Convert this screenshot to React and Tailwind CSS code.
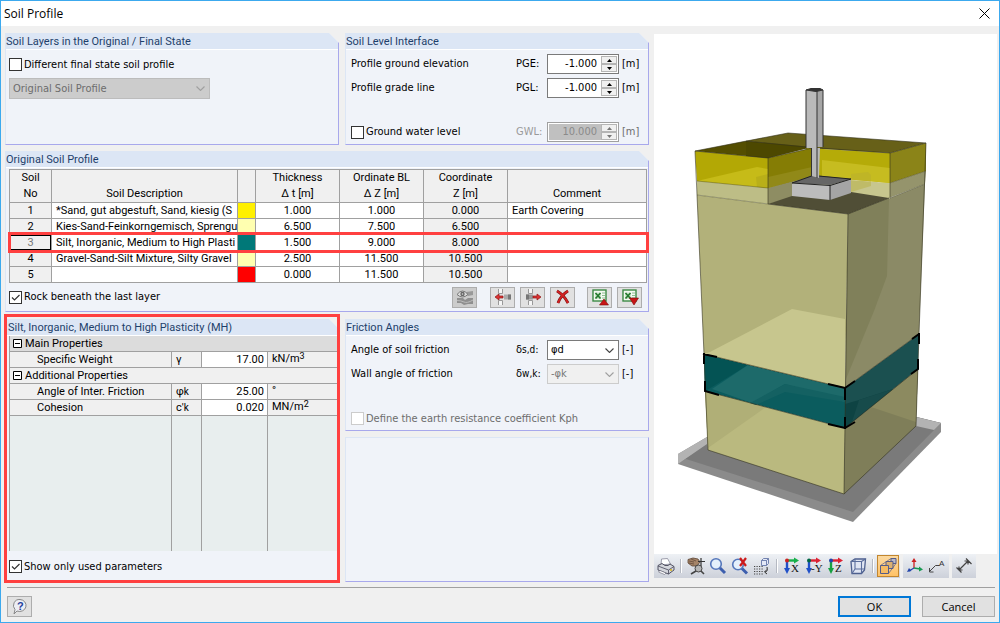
import React, { useState } from "react";

const LAYERS = [
    { no: 1, name: "*Sand, gut abgestuft, Sand, kiesig (S", swatch: "bg-[#fff000]", t: "1.000", dz: "1.000", z: "0.000", comment: "Earth Covering" },
    { no: 2, name: "Kies-Sand-Feinkorngemisch, Sprengu", swatch: "bg-[#ffffb0]", t: "6.500", dz: "7.500", z: "6.500", comment: "" },
    { no: 3, name: "Silt, Inorganic, Medium to High Plasti", swatch: "bg-[#007878]", t: "1.500", dz: "9.000", z: "8.000", comment: "" },
    { no: 4, name: "Gravel-Sand-Silt Mixture, Silty Gravel", swatch: "bg-[#ffffb0]", t: "2.500", dz: "11.500", z: "10.500", comment: "" },
    { no: 5, name: "", swatch: "bg-[#ff0000]", t: "0.000", dz: "11.500", z: "10.500", comment: "" },
];

const Group = ({ title, className = "", children }) => (
    <section className={`flex flex-col border-r border-b border-l border-[#a8a8ec] border-l-[#dce6f5] bg-[#f0f3f9] [clip-path:polygon(0_0,calc(100%-10px)_0,100%_10px,100%_100%,0_100%)] ${className}`}>
        <h2 className="h-[17px] shrink-0 border-b border-white bg-[#dce6f5] font-[Roboto,sans-serif] text-[11px] leading-[17px] text-[#1e3f6b]">
            {title}
        </h2>
        {children}
    </section>
);

const Check = ({ label, checked, onChange, disabled }) => (
    <label className={`flex h-[13px] items-center gap-[2px] whitespace-nowrap ${disabled ? "text-[#6d6d6d]" : ""}`}>
        <span className="grid">
            <input
                type="checkbox"
                checked={checked}
                disabled={disabled}
                onChange={(e) => onChange && onChange(e.target.checked)}
                className="peer col-start-1 row-start-1 size-[13px] appearance-none border border-[#333] bg-white disabled:border-[#ccc]"
            />
            <svg viewBox="0 0 13 13" className="pointer-events-none invisible col-start-1 row-start-1 size-[13px] peer-checked:visible">
                <path d="M3 6.5l2.5 2.5L10.5 4" fill="none" stroke="#333" strokeWidth="1.2" />
            </svg>
        </span>
        {label}
    </label>
);

const Spin = ({ id, value, onChange, disabled }) => {
    const step = (d) => onChange && onChange((parseFloat(value) + d).toFixed(3));
    return (
        <span className={`flex h-5 w-[72px] border bg-white p-px ${disabled ? "border-[#a0a0a0] text-[#8a8a8a]" : "border-[#7a7a7a]"}`}>
            <input
                id={id}
                value={value}
                disabled={disabled}
                onChange={(e) => onChange && onChange(e.target.value)}
                className="w-0 flex-1 bg-white pr-1 text-right outline-none disabled:bg-[#c0c0c0]"
            />
            <span className="flex w-4 flex-col bg-[#ddd]">
                <button type="button" aria-label="Increase" disabled={disabled} onClick={() => step(0.5)} className="flex flex-1 items-center justify-center border border-[#b5b5b5] bg-[#f0f0f0]">
                    <svg viewBox="0 0 5 3" className="h-[3px] w-[5px]"><path d="M0 3L2.5 0L5 3z" fill={disabled ? "#777" : "#000"} /></svg>
                </button>
                <button type="button" aria-label="Decrease" disabled={disabled} onClick={() => step(-0.5)} className="flex flex-1 items-center justify-center border border-[#b5b5b5] bg-[#f0f0f0]">
                    <svg viewBox="0 0 5 3" className="h-[3px] w-[5px]"><path d="M0 0L2.5 3L5 0z" fill={disabled ? "#777" : "#000"} /></svg>
                </button>
            </span>
        </span>
    );
};

const Dropdown = ({ id, label, options, disabled, className }) => (
    <span className={`relative flex ${className}`}>
        <select id={id} aria-label={label} disabled={disabled} className="h-full w-full appearance-none bg-transparent pl-[3px] opacity-100 outline-none">
            {options.map((o) => <option key={o}>{o}</option>)}
        </select>
        <svg viewBox="0 0 9 5" className="pointer-events-none absolute top-[7px] right-1 h-[5px] w-[9px]">
            <path d="M.5 .5l4 4l4-4" fill="none" stroke={disabled ? "#a0a0a0" : "#444"} strokeWidth="1.1" />
        </svg>
    </span>
);

const ExcelIcon = ({ down }) => (
    <svg viewBox="0 0 18 18" className="size-[18px]">
        <rect x="2" y="2" width="13" height="11" fill="#f3f8f1" stroke="#3c8a45" strokeWidth="1.4" />
        <path d="M11 5h3M11 7.5h3M11 10h3" stroke="#8fbf92" />
        <path d="M4 4.5h6v6.5H4z" fill="#cfe6cc" />
        <path d="M4.5 5l5 5.5M9.5 5l-5 5.5" stroke="#257a2e" strokeWidth="1.7" />
        <path d={down ? "M8.5 10h9l-4.5 7z" : "M8.5 17h9l-4.5-6z"} fill="#c81414" stroke="#7c0a0a" strokeWidth=".6" />
    </svg>
);

const TABLE_TOOLS = [
    {
        label: "Show soil", off: true, gap: "mr-[13px]", icon: (
            <svg viewBox="0 0 18 18" className="size-[18px]">
                <path d="M1 10h6l2 2l3-2h5v6l-5 0l-4 1l-3-2H1z" fill="#8f8f8f" />
                <path d="M10 4l7-1v4l-5 1z" fill="#999" />
                <path d="M1 12.5q4 0 7 1.5t9-2" fill="none" stroke="#bbb" />
                <path d="M1 6.5q5.5-7 11 0q-5.5 5-11 0z" fill="#ddd" stroke="#777" />
                <circle cx="6.5" cy="6" r="2.2" fill="#666" />
                <circle cx="6.5" cy="6" r=".8" fill="#ddd" />
            </svg>
        ),
    },
    {
        label: "Insert layer", gap: "mr-[5px]", icon: (
            <svg viewBox="0 0 18 18" className="size-[18px]">
                <path d="M4.5 1v4.500h4V1M4.5 17v-4.500h4V17" fill="#f6f6f6" stroke="#999" />
                <path d="M10 6.5h7v5h-7z" fill="#aaa" />
                <path d="M14 6.5h3v5h-3z" fill="#777" />
                <path d="M1 9l4-3v2h4v2h-4v2z" fill="#d33" stroke="#8c1515" strokeWidth=".7" />
            </svg>
        ),
    },
    {
        label: "Remove layer", gap: "mr-[5px]", icon: (
            <svg viewBox="0 0 18 18" className="size-[18px]">
                <path d="M4.5 1v4.500h4V1M4.5 17v-4.500h4V17" fill="#f6f6f6" stroke="#999" />
                <path d="M2 6.5h7v5H2z" fill="#999" />
                <path d="M2 6.5h3v5H2z" fill="#777" />
                <path d="M17 9l-4-3v2H9v2h4v2z" fill="#d33" stroke="#8c1515" strokeWidth=".7" />
            </svg>
        ),
    },
    {
        label: "Delete all", gap: "mr-3", icon: (
            <svg viewBox="0 0 18 18" className="size-[18px]">
                <path d="M3 3q7 4 11 12M14 3q-7 4-10 12" fill="none" stroke="#7d1010" strokeWidth="2.8" />
                <path d="M3 3q7 4 11 12M14 3q-7 4-10 12" fill="none" stroke="#d32222" strokeWidth="1.8" />
            </svg>
        ),
    },
    { label: "Export to Excel", gap: "mr-[5px]", icon: <ExcelIcon /> },
    { label: "Import from Excel", gap: "", icon: <ExcelIcon down /> },
];

const Axes = ({ top, side, letter, dot }) => (
    <svg viewBox="0 0 18 18" className="size-[18px] overflow-visible">
        <path d="M3 3.5h9" stroke={top} strokeWidth="2.4" />
        <path d="M11 .5l5 3l-5 3z" fill={top} />
        <path d="M4 4v9" stroke={side} strokeWidth="2.4" />
        <path d="M1 11h6l-3 6z" fill={side} />
        <circle cx="4" cy="3.5" r="2" fill={dot} />
        <text x={letter.length > 1 ? 6 : 8} y="15" fontFamily="Liberation Serif, serif" fontSize="11" fill="#111">{letter}</text>
    </svg>
);

const VIEW_TOOLS = [
    [
        {
            label: "Print", icon: (
                <svg viewBox="0 0 18 18" className="size-[18px]">
                    <path d="M4 8l.5-6l6-.5l3 5.5z" fill="#fff" stroke="#889" strokeWidth=".8" />
                    <path d="M1 8.5l4-2l3 2h3l2-1.5l4 2.5v3.5l-5.5 4L1 13z" fill="#d4d6dc" stroke="#445" strokeWidth=".9" />
                    <path d="M1 9l10.5 4l5.5-3.5M11.5 13v4" fill="none" stroke="#556" strokeWidth=".9" />
                    <path d="M3 13.5l6 2.5l-1.5 1.5l-6-2.5z" fill="#fff" stroke="#667" strokeWidth=".6" />
                    <circle cx="14" cy="13" r=".9" fill="#d9b000" />
                </svg>
            ),
        },
        null,
        {
            label: "Move", icon: (
                <svg viewBox="0 0 18 18" className="size-[18px]">
                    <path d="M1 2.5l5-1.5l5 1l2 3l-3 4l-5 0l-4-3z" fill="#a58468" stroke="#5b4433" strokeWidth=".8" />
                    <path d="M2 4l5 1M2 6l5 1M4 2l5 2" stroke="#5b4433" strokeWidth=".7" />
                    <path d="M14 1v8M11 4.5h7" stroke="#333" strokeWidth="1.2" />
                    <circle cx="11.5" cy="11.5" r="3.5" fill="#b5b5b5" stroke="#444" />
                    <path d="M9 14l-5 3M14 14l3 3" stroke="#444" strokeWidth="1.6" />
                </svg>
            ),
        },
        {
            label: "Zoom", icon: (
                <svg viewBox="0 0 18 18" className="size-[18px]">
                    <path d="M10.5 10.5l5.5 5.5" stroke="#3d5fae" strokeWidth="3" />
                    <circle cx="7" cy="7" r="5.3" fill="#e4f0fb" stroke="#5577bb" strokeWidth="1.6" />
                </svg>
            ),
        },
        {
            label: "Cancel zoom", icon: (
                <svg viewBox="0 0 18 18" className="size-[18px]">
                    <path d="M10.5 11l5.5 5.5" stroke="#3d5fae" strokeWidth="3" />
                    <circle cx="7" cy="7.5" r="5.3" fill="#e4f0fb" stroke="#5577bb" strokeWidth="1.6" />
                    <path d="M9 1l6 8M15 1L9 9" stroke="#cc1a1a" strokeWidth="2.2" />
                </svg>
            ),
        },
        {
            label: "Grid view", icon: (
                <svg viewBox="0 0 18 18" className="size-[18px]">
                    <path d="M1 9.5h9M1 12h9M1 14.5h9M1 17h9" stroke="#444" strokeWidth="1.2" strokeDasharray="1.2 1.3" />
                    <path d="M8.5 3.5h5v5h-5zM8.5 3.5l2-2h5v5l-2 2M13.5 3.5l2-2" fill="#e4e9f7" stroke="#6678a8" strokeWidth=".9" />
                    <path d="M14 10q1 5-2 5M14 12.5l-2.5 2.5l2.5 2" fill="none" stroke="#333" />
                </svg>
            ),
        },
        null,
        { label: "View X", icon: <Axes top="#16b04a" side="#2050c8" letter="X" dot="#c22" /> },
        { label: "View -Y", icon: <Axes top="#dd2233" side="#2050c8" letter="-Y" dot="#064" /> },
        { label: "View Z", icon: <Axes top="#dd2233" side="#16a040" letter="Z" dot="#24a" /> },
        {
            label: "Isometric view", icon: (
                <svg viewBox="0 0 18 18" className="size-[18px]">
                    <path d="M2 4.5l4-2.5h10.5l-1 11l-3 3.5H3z" fill="#dfe5f3" stroke="#4d5f8e" strokeWidth="1.3" />
                    <path d="M2 4.5h10.5v12M12.5 4.5l4-2.5M6 2v10h9.5M6 12l-3 4.5" fill="none" stroke="#5a6d9c" strokeWidth="1.1" />
                </svg>
            ),
        },
        null,
        {
            label: "Perspective", active: true, icon: (
                <svg viewBox="0 0 18 18" className="size-[18px]">
                    <path d="M12 1.5h5v5h-5z" fill="#b9b8c9" stroke="#555c88" />
                    <path d="M7 4.5h7v7H7z" fill="#dcb172" stroke="#555c88" />
                    <path d="M1.5 8.5h8v8h-8z" fill="#f5bb63" stroke="#555c88" />
                    <path d="M1.5 8.5L12 1.5M9.5 16.5L17 6.5" stroke="#555c88" strokeWidth=".7" />
                </svg>
            ),
        },
    ],
    [
        {
            label: "Axes", icon: (
                <svg viewBox="0 0 18 18" className="size-[18px]">
                    <path d="M8 11V4" stroke="#cc2222" strokeWidth="1.3" />
                    <path d="M5.5 5L8 1l2.5 4z" fill="#cc2222" />
                    <path d="M8 11l6 1" stroke="#169a50" strokeWidth="1.3" />
                    <path d="M13 9.5l4 3l-4 2z" fill="#169a50" />
                    <path d="M8 11l-5 3" stroke="#2244aa" strokeWidth="1.3" />
                    <path d="M1 15l2-4l2.5 3z" fill="#2244aa" />
                </svg>
            ),
        },
        {
            label: "Labels", icon: (
                <svg viewBox="0 0 18 18" className="size-[18px]">
                    <path d="M1.5 14.5l6-6h4M1.5 11v4h4" fill="none" stroke="#444" />
                    <text x="11" y="9" fontFamily="Liberation Sans, sans-serif" fontSize="8" fill="#333">A</text>
                </svg>
            ),
        },
    ],
    [
        {
            label: "Dimensions", icon: (
                <svg viewBox="0 0 18 18" className="size-[18px]">
                    <path d="M4 13L13 4M4 9.5V13h3.5M9.5 4H13v3.5M1.5 10.5l5 5M11 1.5l5.5 5.5" fill="none" stroke="#444" strokeWidth="1.2" />
                </svg>
            ),
        },
    ],
];

const SoilModel = () => (
    <svg viewBox="654 34 343 519" className="h-[519px] w-full" role="img" aria-label="Soil model">
        {/* base slab */}
        <path d="M678 453L707 436L917 416L941 422V431L853 521L678 463z" fill="#8b8b8b" />
        <path d="M678 453L707 436V444L678 463z" fill="#b3b3b3" />
        <path d="M678 463L707 443L708 449L844 492L916 424L916 416L941 422L853 511L686 458z" fill="#7a7a7a" />
        <path d="M916 416L941 422L934 429L916 425z" fill="#b3b3b3" />
        {/* bottom layer */}
        <path d="M705 390L845 427L844 493L708 449z" fill="#bab97f" />
        <path d="M705 390L766 406L708 447z" fill="#b0af77" />
        <path d="M845 427L918 368L916 425L844 493z" fill="#7f7e59" />
        <path d="M871 406L918 368L916 421z" fill="#8c8a60" />
        {/* silt band */}
        <path d="M704 353L845 387V427L705 390z" fill="#0b5c5e" />
        <path d="M704 353L748 364L712 386L705 390z" fill="#045354" />
        <path d="M748 364L845 387V401L785 383L752 402L712 388z" fill="#1d6a6a" />
        <path d="M785 383L845 396V401L785 391L756 404L750 402z" fill="#146162" />
        <path d="M845 387L919 333L918 368L845 427z" fill="#1b5050" />
        <path d="M845 403L859 399L893 388L845 427z" fill="#0e4343" />
        <path d="M859 399L893 388L888 392L852 421z" fill="#174b4b" />
        {/* main body */}
        <path d="M697 194L848 213L845 387L704 353z" fill="#b2b17a" />
        <path d="M710 351L792 308L845 318V387L704 353z" fill="#c7c68e" />
        <path d="M848 213L890 197L925 183L919 333L845 387z" fill="#8b8a66" />
        <path d="M848 213L889 197L887 275L874 310L846 378z" fill="#80805a" />
        {/* thin stratum above the footing base */}
        <path d="M697 180L768 187V203L697 194z" fill="#bdbd86" />
        <path d="M890 182L926 170L925 183L889 197z" fill="#95946c" />
        <path d="M768 187L808 176L890 182V197L768 203z" fill="#c7c68e" />
        <path d="M768 187L812 174V192L768 203z" fill="#8e8d63" />
        {/* pit */}
        <path d="M768 203L795 194L851 191L889 197L848 213z" fill="#504e36" />
        <path d="M806 147L890 152V182L812 175z" fill="#b5ab08" />
        <path d="M822 159L890 167V182L822 176z" fill="#c6bc20" />
        <path d="M768 157L812 147V175L768 187z" fill="#857d05" />
        <path d="M768 176L812 166V175L768 187z" fill="#918918" />
        <path d="M851 173L868 171L871 174V185L851 191z" fill="#b5ab30" opacity=".4" />
        {/* earth covering */}
        <path d="M695 150L768 157V187L697 180z" fill="#b3a805" />
        <path d="M697 180L757 166L768 168V187z" fill="#c6bb18" />
        <path d="M756 176L768 173V187L757 186z" fill="#b9af18" />
        <path d="M890 152L926 142V170L890 182z" fill="#8b8418" />
        <path d="M695 150L746 140L812 146L768 157z" fill="#544e00" />
        <path d="M746 140L788 132L926 142L890 152L806 147z" fill="#676018" />
        <path d="M746 140L812 146L768 157L746 155z" fill="#4d4800" />
        <g fill="none" stroke="#33321e" strokeWidth=".7" opacity=".85">
            <path d="M695 150L788 132L926 142L890 152L820 147M695 150L768 157L812 147M768 157V203M890 152V197M746 140L806 146" />
            <path d="M695 150L697 194L704 353L708 449L844 493L916 425L919 333L926 142M768 203L848 213L889 197" />
            <path d="M890 197L925 183M890 182L926 170M697 180L768 187M697 194L768 203" opacity=".6" />
            <path d="M848 213L844 493M704 353L845 387L919 333M705 390L845 427L918 368" />
        </g>
        {/* footing and column */}
        <path d="M792 182L813 174L851 178L830 184z" fill="#666" />
        <path d="M792 182L830 184V199L792 195z" fill="#bcbcbc" />
        <path d="M830 184L851 178V192L830 199z" fill="#a5a5a5" />
        <path d="M792 182L830 184.5L851 178M830 184V199M792 182L813 174.5L851 178" fill="none" stroke="#222" strokeWidth="1" />
        <path d="M811.5 147H820L819 177L811.5 175z" fill="#b8b8b8" />
        <path d="M806 89H817V147H806z" fill="#bababa" />
        <path d="M817 89H823V146H817z" fill="#a6a6a6" />
        <path d="M806 89L811 87.5H820L823 89L816 90.5z" fill="#333" stroke="#333" />
        <path d="M806 89V147M817 89V177M823 89V146M811.5 147V175" fill="none" stroke="#333" strokeWidth="1" />
        {/* selection corners */}
        <path d="M703 353L717 356M704 352V363M705 380V390L719 394M828 383L845 387L855 380M845 387V399M828 423L845 427L855 421M845 416V428M912 338L919 333M919 332V343M918 358V368L911 373" fill="none" stroke="#000" strokeWidth="2" />
    </svg>
);

const PropRow = ({ name, sym, value, unit }) => (
    <tr className="h-4 bg-[#f0f0f0]">
        <th scope="row" className="border-r border-b border-[#a0a0a0] pl-[27px] text-left font-normal">{name}</th>
        <td className="border-r border-b border-[#a0a0a0] pl-1"><span className="block h-[15px]">{sym}</span></td>
        <td className="border-r border-b border-[#a0a0a0] bg-white pr-[3px] text-right">{value}</td>
        <td className="border-b border-[#a0a0a0] pl-1"><span className="block h-[15px] leading-[13px]">{unit}</span></td>
    </tr>
);

const PropHead = ({ title, className }) => (
    <tr className={`h-4 ${className}`}>
        <th colSpan={4} className="border-b border-[#a0a0a0] pl-[3px] text-left font-normal">
            <span className="flex h-[15px] items-center gap-[3px]">
                <svg viewBox="0 0 9 9" className="size-[9px]"><path d="M.5 .5h8v8h-8zM2 4.5h5" fill="#fff" stroke="#000" /></svg>
                {title}
            </span>
        </th>
    </tr>
);

const Sub = ({ children }) => <span className="text-[10px] leading-none">{children}</span>;

const App = () => {
    const [finalState, setFinalState] = useState(false);
    const [rock, setRock] = useState(true);
    const [usedOnly, setUsedOnly] = useState(true);
    const [water, setWater] = useState(false);
    const [pge, setPge] = useState("-1.000");
    const [pgl, setPgl] = useState("-1.000");

    return (
        <div className="flex min-h-screen flex-col border border-[#3ca9ee] bg-[#f0f0f0] font-['DejaVu_Sans_Condensed','DejaVu_Sans',sans-serif] text-[11px] leading-[14px] text-black">
            <header className="flex h-[25px] items-center justify-between bg-white pr-[9px] pl-[3px]">
                <h1 className="font-['Open_Sans',sans-serif] text-xs">Soil Profile</h1>
                <button type="button" aria-label="Close">
                    <svg viewBox="0 0 11 11" className="size-[11px]"><path d="M.5 .5l10 10M10.5 .5l-10 10" stroke="#000" /></svg>
                </button>
            </header>

            <main className="flex flex-1 gap-[5px] pt-[7px] pr-[2px] pl-1">
                <div className="flex min-w-0 flex-[644] flex-col">
                    <div className="mb-[6px] grid grid-cols-[334fr_304fr] gap-[6px]">
                        <Group title="Soil Layers in the Original / Final State" className="min-h-28">
                            <div className="flex flex-col items-start gap-[7px] px-[3px] pt-2">
                                <Check label="Different final state soil profile" checked={finalState} onChange={setFinalState} />
                                <Dropdown label="Profile" options={["Original Soil Profile"]} disabled className="h-[21px] w-[201px] border border-[#bcbcbc] bg-[#ccc] text-[#6d6d6d]" />
                            </div>
                        </Group>
                        <Group title="Soil Level Interface" className="min-h-28">
                            <div className="flex flex-col gap-1 pt-1 pl-[5px]">
                                <div className="flex items-center">
                                    <span className="flex-1">Profile ground elevation</span>
                                    <label htmlFor="pge" className="w-[31px]">PGE:</label>
                                    <Spin id="pge" value={pge} onChange={setPge} />
                                    <span className="w-[29px] pl-[3px]">[m]</span>
                                </div>
                                <div className="flex items-center">
                                    <span className="flex-1">Profile grade line</span>
                                    <label htmlFor="pgl" className="w-[31px]">PGL:</label>
                                    <Spin id="pgl" value={pgl} onChange={setPgl} />
                                    <span className="w-[29px] pl-[3px]">[m]</span>
                                </div>
                                <div className="mt-5 flex items-center">
                                    <span className="flex-1"><Check label="Ground water level" checked={water} onChange={setWater} /></span>
                                    <label htmlFor="gwl" className="w-[31px] text-[#9a9a9a]">GWL:</label>
                                    <Spin id="gwl" value="10.000" disabled />
                                    <span className="w-[29px] pl-[3px] text-[#6d6d6d]">[m]</span>
                                </div>
                            </div>
                        </Group>
                    </div>

                    <Group title="Original Soil Profile" className="mb-[7px]">
                        <div className="pt-px pr-px pl-[3px]">
                            <table className="w-full table-fixed border-separate border-spacing-0 border-t border-l border-[#a0a0a0] bg-white font-[Roboto,sans-serif] leading-[15px]">
                                <colgroup>
                                    <col className="w-[42px]" />
                                    <col className="w-[186px]" />
                                    <col className="w-[18px]" />
                                    <col className="w-[84px]" />
                                    <col className="w-[84px]" />
                                    <col className="w-[84px]" />
                                    <col />
                                </colgroup>
                                <thead>
                                    <tr className="h-8 bg-[#f0f0f0] align-bottom leading-4 *:border-r *:border-b *:border-[#a0a0a0] *:font-normal">
                                        <th>Soil<br />No</th>
                                        <th>Soil Description</th>
                                        <th aria-label="Color"></th>
                                        <th>Thickness<br />Δ t [m]</th>
                                        <th>Ordinate BL<br />Δ Z [m]</th>
                                        <th>Coordinate<br />Z [m]</th>
                                        <th>Comment</th>
                                    </tr>
                                </thead>
                                <tbody>
                                    {LAYERS.map((l) => (
                                        <tr key={l.no} className="relative h-4 text-center *:border-r *:border-b *:border-[#a0a0a0]">
                                            <td className="bg-[#f0f0f0]">
                                                {l.no === 3 ? (
                                                    <>
                                                        <span className="block h-[15px] border border-black leading-[13px] text-[#777]">{l.no}</span>
                                                        <span className="pointer-events-none absolute -inset-x-[2px] -top-[3px] -bottom-[2px] z-10 border-3 border-[#ff4040]" />
                                                    </>
                                                ) : l.no}
                                            </td>
                                            <td className="pl-1 text-left whitespace-nowrap">{l.name}</td>
                                            <td className={l.swatch}></td>
                                            <td>{l.t}</td>
                                            <td>{l.dz}</td>
                                            <td className="bg-[#f0f0f0]">{l.z}</td>
                                            <td className="pl-1 text-left">{l.comment}</td>
                                        </tr>
                                    ))}
                                </tbody>
                            </table>
                        </div>
                        <div className="flex h-7 items-center justify-between pr-[6px] pl-[3px]">
                            <Check label="Rock beneath the last layer" checked={rock} onChange={setRock} />
                            <div className="flex">
                                {TABLE_TOOLS.map((b) => (
                                    <button key={b.label} type="button" aria-label={b.label} disabled={b.off} className={`flex h-[21px] w-[25px] items-center justify-center border border-[#adadad] ${b.off ? "bg-[#ccc]" : "bg-[#e1e1e1]"} ${b.gap}`}>
                                        {b.icon}
                                    </button>
                                ))}
                            </div>
                        </div>
                    </Group>

                    <div className="grid flex-1 grid-cols-[334fr_304fr] gap-[6px]">
                        <div className="relative flex flex-col">
                            <Group title={<span className="pl-[2px]">Silt, Inorganic, Medium to High Plasticity (MH)</span>} className="flex-1">
                                <div className="pl-[3px]">
                                    <table className="w-full table-fixed border-separate border-spacing-0 border-l border-[#a0a0a0] font-[Roboto,sans-serif] leading-[15px]">
                                        <colgroup>
                                            <col />
                                            <col className="w-[30px]" />
                                            <col className="w-[66px]" />
                                            <col className="w-[70px]" />
                                        </colgroup>
                                        <tbody>
                                            <PropHead title="Main Properties" className="bg-[#dcdcdc]" />
                                            <PropRow name="Specific Weight" sym="γ" value="17.00" unit={<>kN/m<sup className="top-[-3px] text-[9px]">3</sup></>} />
                                            <PropHead title="Additional Properties" className="bg-[#f0f0f0]" />
                                            <PropRow name="Angle of Inter. Friction" sym={<>φ<Sub>k</Sub></>} value="25.00" unit="°" />
                                            <PropRow name="Cohesion" sym={<>c'<Sub>k</Sub></>} value="0.020" unit={<>MN/m<sup className="top-[-3px] text-[9px]">2</sup></>} />
                                            <tr className="h-[135px] bg-[#e8eeee]">
                                                <td className="border-r border-[#a0a0a0]"></td>
                                                <td className="border-r border-[#a0a0a0]"></td>
                                                <td className="border-r border-[#a0a0a0]"></td>
                                                <td></td>
                                            </tr>
                                        </tbody>
                                    </table>
                                </div>
                                <div className="px-[3px] pt-[9px]">
                                    <Check label="Show only used parameters" checked={usedOnly} onChange={setUsedOnly} />
                                </div>
                            </Group>
                            <span className="pointer-events-none absolute -inset-x-px -top-[5px] -bottom-px border-3 border-[#ff4040]" />
                        </div>

                        <div className="flex flex-col gap-[6px]">
                            <Group title="Friction Angles" className="min-h-28">
                                <div className="flex flex-col gap-1 pt-1 pl-[5px]">
                                    <div className="flex items-center">
                                        <span className="flex-1">Angle of soil friction</span>
                                        <label htmlFor="dsd" className="w-[31px] whitespace-nowrap">δ<Sub>s,d</Sub>:</label>
                                        <Dropdown id="dsd" options={["φd"]} className="h-5 w-[72px] border border-[#7a7a7a] bg-white" />
                                        <span className="w-[29px] pl-[3px]">[-]</span>
                                    </div>
                                    <div className="flex items-center">
                                        <span className="flex-1">Wall angle of friction</span>
                                        <label htmlFor="dwk" className="w-[31px] whitespace-nowrap">δ<Sub>w,k</Sub>:</label>
                                        <Dropdown id="dwk" options={["-φk"]} disabled className="h-5 w-[72px] border border-[#ccc] bg-[#f0f0f0] text-[#777]" />
                                        <span className="w-[29px] pl-[3px]">[-]</span>
                                    </div>
                                    <div className="mt-6">
                                        <Check label="Define the earth resistance coefficient Kph" checked={false} disabled />
                                    </div>
                                </div>
                            </Group>
                            <div className="flex-1 border border-[#dce6f5] border-r-[#a8a8ec] border-b-[#a8a8ec] bg-[#f0f3f9]" />
                        </div>
                    </div>
                </div>

                <div className="flex min-w-0 flex-[343] flex-col pt-px pb-1">
                    <div className="flex flex-1 items-center bg-white">
                        <SoilModel />
                    </div>
                    <div className="flex h-6 gap-[3px]">
                        {VIEW_TOOLS.map((group, g) => (
                            <div key={g} className="flex items-center bg-linear-to-b from-[#eef1f5] to-[#cdd1da] px-px">
                                {group.map((b, i) => b ? (
                                    <button key={b.label} type="button" aria-label={b.label} className={`flex h-[22px] w-[22px] items-center justify-center ${b.active ? "border border-[#c2862f] bg-linear-to-b from-[#fbd9a0] to-[#ffc266]" : ""}`}>
                                        {b.icon}
                                    </button>
                                ) : (
                                    <span key={i} className="mx-[3px] h-[14px] w-[2px] border-r border-white bg-[#b5b9c2]" />
                                ))}
                            </div>
                        ))}
                    </div>
                </div>
            </main>

            <footer className="mt-[5px] mr-1 ml-[6px] flex h-[35px] items-center justify-between border-t border-[#a0a0a0] pt-[3px]">
                <button type="button" aria-label="Help" className="flex h-[21px] w-[25px] items-center justify-center border border-[#adadad] bg-[#e1e1e1]">
                    <svg viewBox="0 0 18 18" className="size-[18px]">
                        <path d="M9 1.5a6.5 6 0 1 1-3 11.5l-3 3l1-4.5A6 6 0 0 1 9 1.5z" fill="#eceef4" stroke="#888" />
                        <text x="6" y="12" fontFamily="Liberation Sans, sans-serif" fontWeight="bold" fontSize="11" fill="#24409c">?</text>
                    </svg>
                </button>
                <div className="flex gap-[11px] font-['Open_Sans',sans-serif]">
                    <button type="button" className="h-[21px] w-[73px] border-2 border-[#0078d7] bg-[#e1e1e1]">OK</button>
                    <button type="button" className="h-[21px] w-[73px] border border-[#adadad] bg-[#e1e1e1]">Cancel</button>
                </div>
            </footer>
        </div>
    );
};

export default App;
